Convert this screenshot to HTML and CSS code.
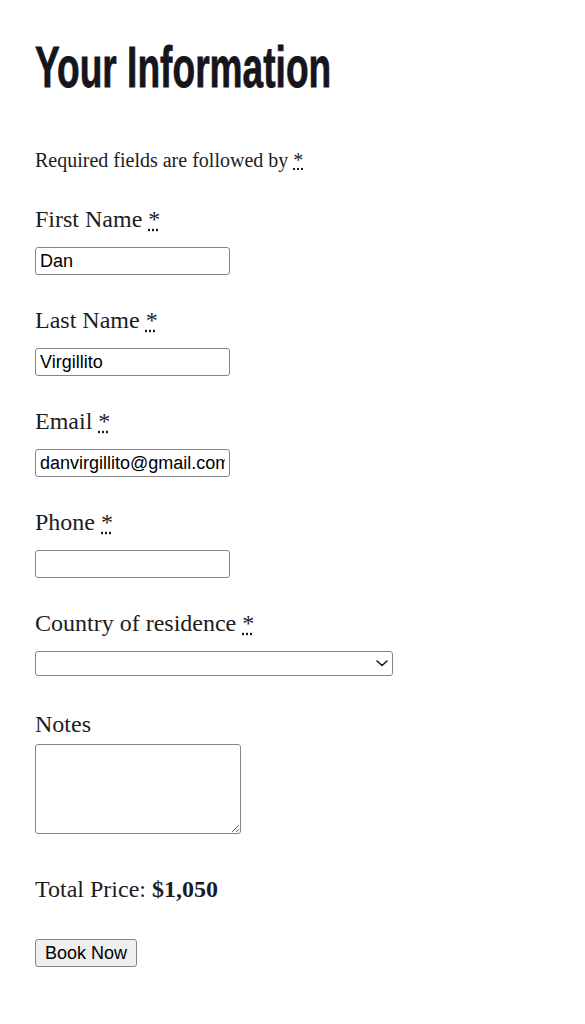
FILE: index.html
```html
<!DOCTYPE html>
<html lang="en">
<head>
  <meta charset="UTF-8">
  <meta name="viewport" content="width=device-width, initial-scale=1.0">
  <title>Your Information</title>
  <link rel="stylesheet" href="styles.css">
</head>
<body>
  <h1 class="page-title">Your Information</h1>

  <p class="note">Required fields are followed by <abbr title="required">*</abbr></p>

  <form class="booking">
    <!-- Contact details -->
    <div class="field">
      <label for="first-name">First Name <abbr title="required">*</abbr></label>
      <input type="text" id="first-name" value="Dan" required>
    </div>

    <div class="field">
      <label for="last-name">Last Name <abbr title="required">*</abbr></label>
      <input type="text" id="last-name" value="Virgillito" required>
    </div>

    <div class="field">
      <label for="email">Email <abbr title="required">*</abbr></label>
      <input type="email" id="email" value="danvirgillito@gmail.com" required>
    </div>

    <div class="field">
      <label for="phone">Phone <abbr title="required">*</abbr></label>
      <input type="tel" id="phone" required>
    </div>

    <div class="field">
      <label for="country">Country of residence <abbr title="required">*</abbr></label>
      <div class="select-wrap">
        <select id="country" required>
          <option value=""></option>
        </select>
        <svg class="chevron" width="12" height="7" viewBox="0 0 12 7" aria-hidden="true">
          <path d="M1 1l5 4.5L11 1" fill="none" stroke="#1a1a1a" stroke-width="1.6" stroke-linecap="round" stroke-linejoin="round"/>
        </svg>
      </div>
    </div>

    <div class="field field-notes">
      <label for="notes">Notes</label>
      <textarea id="notes"></textarea>
    </div>

    <!-- Summary -->
    <p class="total">Total Price: <strong>$1,050</strong></p>

    <button type="submit" class="book-btn">Book Now</button>
  </form>
</body>
</html>
```

FILE: styles.css
```css
body {
  margin: 0;
  padding: 38px 35px 40px;
  font-family: "Liberation Serif", "Times New Roman", serif;
  color: #1c1c1e;
  background: #fff;
}

.page-title {
  display: inline-block;
  margin: 0;
  font-family: "Liberation Sans", Arial, sans-serif;
  font-size: 58px;
  line-height: 58px;
  font-weight: bold;
  color: #15151b;
  white-space: nowrap;
  -webkit-text-stroke: 0.8px #15151b;
  transform: scaleX(0.64);
  transform-origin: left center;
}

.note {
  margin: 52px 0 0;
  font-size: 20px;
  line-height: 24px;
}

.booking {
  margin-top: 33px;
}

.field {
  margin-bottom: 31px;
}

.field label {
  display: block;
  font-size: 24px;
  line-height: 28px;
  margin-bottom: 14px;
}

input,
select,
textarea,
button {
  box-sizing: border-box;
  font-family: "Liberation Sans", Arial, sans-serif;
  font-size: 18px;
  color: #000;
  border: 1px solid #858585;
  border-radius: 3px;
  margin: 0;
}

input {
  display: block;
  width: 195px;
  height: 28px;
  padding: 0 4px;
}

.select-wrap {
  position: relative;
  width: 358px;
}

select {
  display: block;
  width: 358px;
  height: 25px;
  background: #fff;
  appearance: none;
  -webkit-appearance: none;
}

.chevron {
  position: absolute;
  right: 5px;
  top: 9px;
  pointer-events: none;
}

.field-notes {
  margin-top: 34px;
  margin-bottom: 41px;
}

.field-notes label {
  margin-bottom: 6px;
}

textarea {
  display: block;
  width: 206px;
  height: 90px;
}

.total {
  margin: 0 0 36px;
  font-size: 24px;
  line-height: 28px;
}

.book-btn {
  width: 102px;
  height: 28px;
  padding: 0;
  background: #efefef;
  cursor: pointer;
}
```
